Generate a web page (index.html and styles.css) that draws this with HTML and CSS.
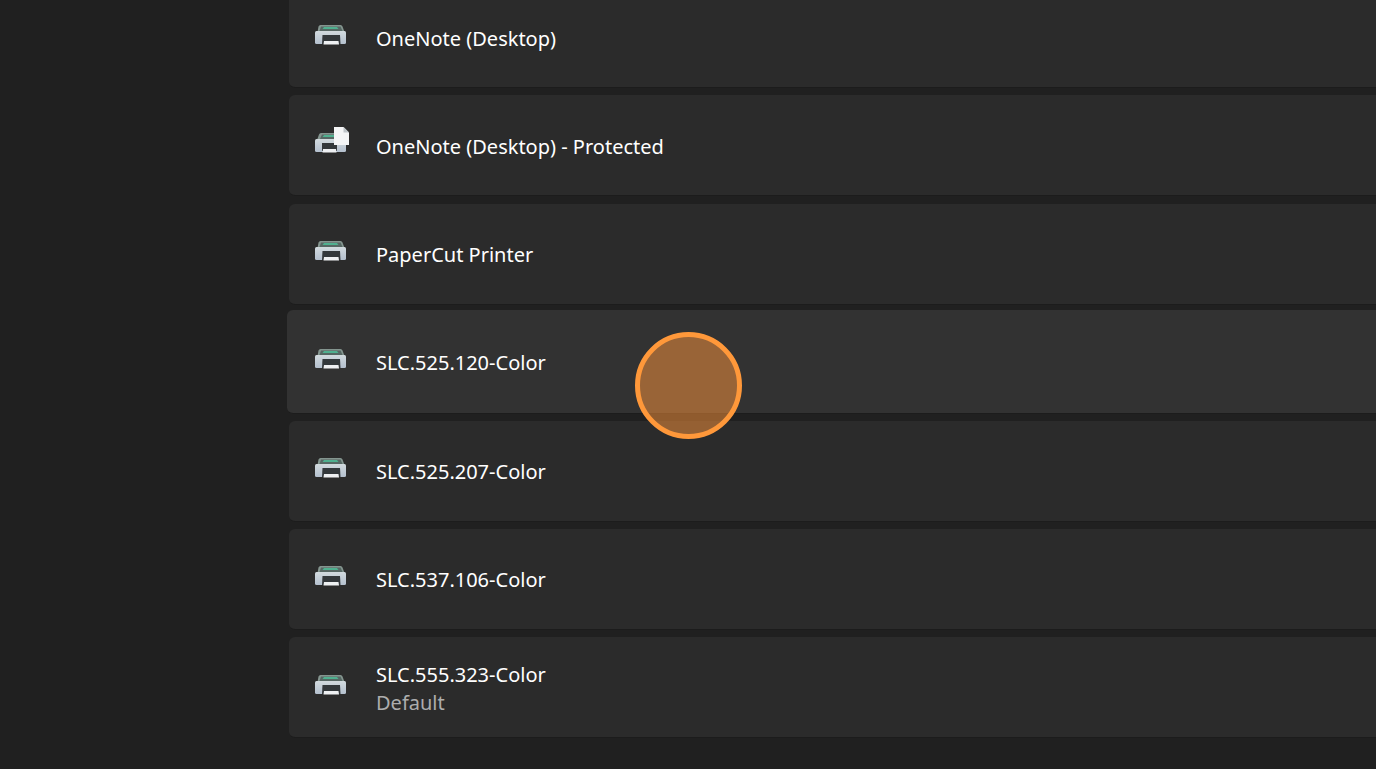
FILE: index.html
```html
<!DOCTYPE html>
<html lang="en">
<head>
<meta charset="UTF-8">
<meta name="viewport" content="width=device-width, initial-scale=1.0">
<title>Printers &amp; scanners</title>
<link rel="stylesheet" href="styles.css">
</head>
<body>
<svg class="defs" width="0" height="0" aria-hidden="true">
  <defs>
    <linearGradient id="bodyShade" x1="0" y1="0" x2="0" y2="1">
      <stop offset="0" stop-color="#d2dade"/>
      <stop offset="1" stop-color="#b4c0ce"/>
    </linearGradient>
    <symbol id="printer" viewBox="0 0 34 22">
      <path d="M4.500 2.500Q5 1 6.500 1h20q1.500 0 2 1.500L30.500 8h-27z" fill="#84958f"/>
      <path d="M7 2.500h19.500L28.500 7h-23z" fill="#566763"/>
      <path d="M10 3h13l1.500 2H8.500z" fill="#4fb08f"/>
      <path d="M2.500 7h28q1.500 0 1.500 1.500v10q0 1.500-1.500 1.500h-28Q1 20 1 18.500v-10Q1 7 2.500 7z" fill="url(#bodyShade)"/>
      <path d="M8.500 11h17.500l.5 9h-18.500z" fill="#33383b"/>
      <path d="M10 17h14.500l.5 3.500H9.500z" fill="#eef0f2"/>
    </symbol>
    <symbol id="printer-page" viewBox="0 0 36 26">
      <path d="M5 7.500Q5.500 6 7 6h20l3 7H3z" fill="#84958f"/>
      <path d="M8 7.500h16l2 4.500H6z" fill="#566763"/>
      <path d="M10 8h11l1.500 2H8.500z" fill="#4fb08f"/>
      <path d="M2.500 12h28q1.500 0 1.500 1.500v10q0 1.500-1.500 1.500h-28Q1 25 1 23.500v-10Q1 12 2.500 12z" fill="url(#bodyShade)"/>
      <path d="M8 16h15v8H8z" fill="#33383b"/>
      <path d="M9 22h13l.5 3.500H8.500z" fill="#eef0f2"/>
      <path d="M20 0h9.500L35 5.500V18H20z" fill="#f4f5f6"/>
      <path d="M29.500 0v5.500H35z" fill="#bfc5c9"/>
    </symbol>
  </defs>
</svg>

<div class="page">
  <aside class="sidebar"></aside>
  <main class="content">
    <ul class="printer-list">
      <li class="printer-row">
        <svg class="printer-icon"><use href="#printer"/></svg>
        <div class="printer-text"><span class="printer-name">OneNote (Desktop)</span></div>
      </li>
      <li class="printer-row">
        <svg class="printer-icon printer-icon-page"><use href="#printer-page"/></svg>
        <div class="printer-text"><span class="printer-name">OneNote (Desktop) - Protected</span></div>
      </li>
      <li class="printer-row">
        <svg class="printer-icon"><use href="#printer"/></svg>
        <div class="printer-text"><span class="printer-name">PaperCut Printer</span></div>
      </li>
      <li class="printer-row printer-row-hover">
        <svg class="printer-icon"><use href="#printer"/></svg>
        <div class="printer-text"><span class="printer-name">SLC.525.120-Color</span></div>
      </li>
      <li class="printer-row">
        <svg class="printer-icon"><use href="#printer"/></svg>
        <div class="printer-text"><span class="printer-name">SLC.525.207-Color</span></div>
      </li>
      <li class="printer-row">
        <svg class="printer-icon"><use href="#printer"/></svg>
        <div class="printer-text"><span class="printer-name">SLC.537.106-Color</span></div>
      </li>
      <li class="printer-row">
        <svg class="printer-icon"><use href="#printer"/></svg>
        <div class="printer-text">
          <span class="printer-name">SLC.555.323-Color</span>
          <span class="printer-status">Default</span>
        </div>
      </li>
    </ul>
  </main>
</div>

<div class="click-marker"></div>
</body>
</html>
```

FILE: styles.css
```css
html, body {
  margin: 0;
  padding: 0;
  height: 100%;
  overflow: hidden;
  background-color: #202020;
  font-family: 'Noto Sans', 'Open Sans', sans-serif;
  color: #fff;
}

.defs {
  display: block;
  height: 0;
}

.page {
  display: flex;
  height: 769px;
  overflow: hidden;
}

.sidebar {
  width: 289px;
  flex-shrink: 0;
}

.content {
  flex: 1;
  min-width: 0;
}

.printer-list {
  list-style: none;
  margin: -13px 0 0;
  padding: 0;
  display: flex;
  flex-direction: column;
  gap: 7.4px;
}

.printer-row {
  display: flex;
  align-items: center;
  height: 101px;
  box-sizing: border-box;
  padding-left: 25px;
  background-color: #2b2b2b;
  border-bottom: 1px solid #1c1c1c;
  border-radius: 6px 0 0 6px;
}

.printer-row-hover {
  height: 104px;
  margin: -2px 0 -1px -2px;
  padding-left: 27px;
  background-color: #323232;
}

.printer-icon {
  width: 34px;
  height: 22px;
  flex-shrink: 0;
  margin-top: -5px;
}

.printer-icon-page {
  width: 36px;
  height: 26px;
  margin-top: -11px;
}

.printer-text {
  margin: 3px 0 0 28px;
  display: flex;
  flex-direction: column;
}

.printer-icon-page + .printer-text {
  margin-left: 26px;
}

.printer-name {
  font-size: 20px;
  line-height: 28px;
}

.printer-status {
  font-size: 20px;
  line-height: 28px;
  color: #adadad;
}

.click-marker {
  position: absolute;
  left: 635px;
  top: 332px;
  width: 107px;
  height: 107px;
  box-sizing: border-box;
  border: 5px solid #ff983a;
  border-radius: 50%;
  background-color: rgba(255, 150, 60, 0.5);
}
```
